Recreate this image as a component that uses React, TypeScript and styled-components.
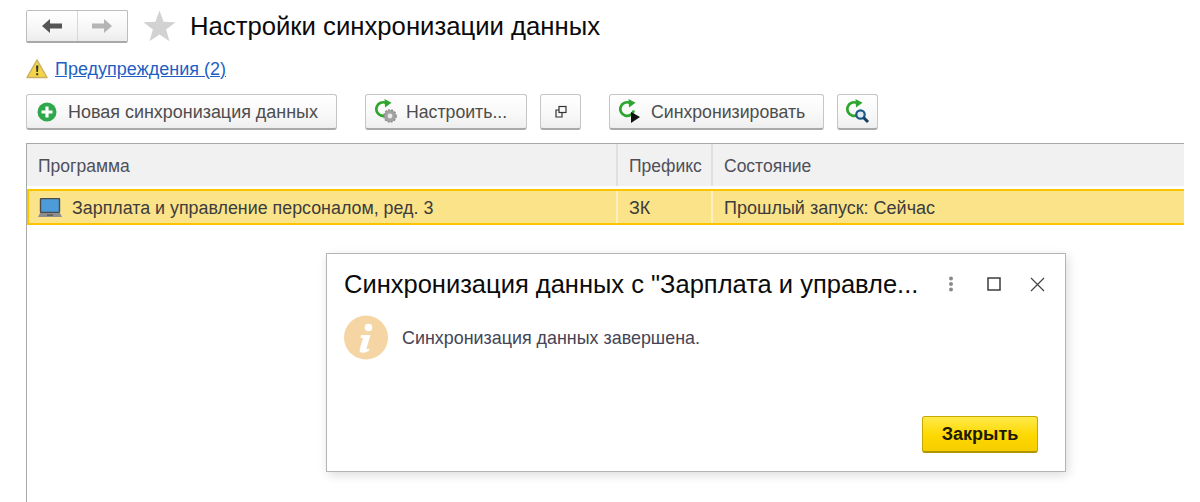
import React from "react";
import styled, { createGlobalStyle } from "styled-components";

const Global = createGlobalStyle`
  html, body { margin: 0; padding: 0; background: #fff; }
  body { font-family: "Liberation Sans", Arial, sans-serif; color: #4a4a4a; }
`;

const Page = styled.div`
  position: relative;
  width: 1200px;
  height: 502px;
  overflow: hidden;
  box-sizing: border-box;
  padding: 9px 16px 0 26px;
  background: #fff;
`;

const Header = styled.div`
  display: flex;
  align-items: center;
  height: 34px;
`;

const NavGroup = styled.div`
  display: flex;
  width: 102px;
  height: 33px;
  box-sizing: border-box;
  border: 1px solid #bdbdbd;
  border-bottom: 2px solid #a8a8a8;
  border-radius: 2px;
  background: linear-gradient(#fff, #f6f6f6 60%, #ececec);
`;

const NavButton = styled.div<{ $divider?: boolean }>`
  flex: 1;
  display: flex;
  align-items: center;
  justify-content: center;
  border-left: ${(p) => (p.$divider ? "1px solid #d8d8d8" : "none")};
`;

const StarWrap = styled.div`
  margin-left: 15px;
  width: 33px;
  height: 32px;
  display: flex;
`;

const Title = styled.h1`
  margin: 0 0 0 14px;
  font-size: 25.7px;
  font-weight: 400;
  line-height: 34px;
  color: #0b0b0b;
`;

const Warnings = styled.div`
  display: flex;
  align-items: center;
  gap: 7px;
  margin-top: 15px;
  height: 22px;
`;

const WarnLink = styled.a`
  font-size: 18px;
  color: #1f5fc4;
  text-decoration: underline;
`;

const Toolbar = styled.div`
  display: flex;
  align-items: flex-start;
  margin-top: 14px;
  height: 36px;
`;

const ToolButton = styled.div<{ $w: number; $ml?: number; $gap?: number; $pl?: number }>`
  display: flex;
  align-items: center;
  justify-content: ${(p) => (p.$w < 50 ? "center" : "flex-start")};
  gap: ${(p) => p.$gap ?? 8}px;
  box-sizing: border-box;
  width: ${(p) => p.$w}px;
  margin-left: ${(p) => p.$ml ?? 0}px;
  height: 36px;
  padding-left: ${(p) => p.$pl ?? 0}px;
  border: 1px solid #c6c6c6;
  border-bottom: 2px solid #a9a9a9;
  border-radius: 3px;
  background: linear-gradient(#fff, #f8f8f8 60%, #eeeeee);
  color: #4d4d4d;
  white-space: nowrap;
`;

const ToolLabel = styled.span<{ $fs: number }>`
  font-size: ${(p) => p.$fs}px;
  padding-top: 1px;
`;

const Table = styled.div`
  margin-top: 13px;
  height: 360px;
  border-left: 1px solid #a9a9a9;
  border-top: 1px solid #a9a9a9;
`;

const HeadRow = styled.div`
  display: grid;
  grid-template-columns: 591px 95px 1fr;
  height: 42px;
  background: #f1f1f1;
  margin-bottom: 3px;
`;

const HeadCell = styled.div<{ $pad: number; $line?: boolean }>`
  display: flex;
  align-items: center;
  padding: 2px 0 0 ${(p) => p.$pad}px;
  border-right: ${(p) => (p.$line ? "2px solid #e0e0e0" : "none")};
  font-size: 17.5px;
  color: #4f4f5a;
`;

const DataRow = styled.div`
  display: grid;
  grid-template-columns: 589px 95px 1fr;
  height: 36px;
  box-sizing: border-box;
  border: 2px solid #fdc400;
  border-right: none;
  background: #fbe38a;
`;

const DataCell = styled.div<{ $pad: number; $line?: boolean; $fs: number }>`
  display: flex;
  align-items: center;
  gap: 10px;
  padding: 2px 0 0 ${(p) => p.$pad}px;
  border-right: ${(p) => (p.$line ? "2px solid #fdf0bd" : "none")};
  font-size: ${(p) => p.$fs}px;
  color: #3c3c3c;
`;

const Modal = styled.div`
  position: absolute;
  left: 326px;
  top: 253px;
  width: 740px;
  height: 219px;
  box-sizing: border-box;
  padding: 0 20px 0 17px;
  background: #fff;
  border: 1px solid #b5b5b5;
  box-shadow: 2px 3px 10px rgba(0, 0, 0, 0.14);
  display: flex;
  flex-direction: column;
`;

const ModalHead = styled.div`
  display: flex;
  align-items: center;
  height: 60px;
`;

const ModalTitle = styled.div`
  flex: 1;
  font-size: 25.5px;
  color: #0b0b0b;
  white-space: nowrap;
`;

const ModalIcons = styled.div`
  display: flex;
  align-items: center;
  gap: 29px;
`;

const DotsSlot = styled.div`
  display: flex;
  margin-right: 4px;
`;

const Message = styled.div`
  display: flex;
  align-items: center;
  gap: 14px;
  height: 46px;
`;

const MessageText = styled.div`
  font-size: 17.9px;
  color: #444455;
  padding-top: 3px;
`;

const ModalFoot = styled.div`
  display: flex;
  justify-content: flex-end;
  margin-top: 56px;
  padding-right: 7px;
`;

const CloseButton = styled.div`
  display: flex;
  align-items: center;
  justify-content: center;
  width: 116px;
  height: 37px;
  box-sizing: border-box;
  border: 1px solid #c7a800;
  border-bottom: 2px solid #b09400;
  border-radius: 3px;
  background: linear-gradient(#ffe94a, #fdd800 55%, #f6ce00);
  font-size: 18px;
  font-weight: 700;
  color: #1e1a00;
`;

const ArrowLeft = () => (
  <svg width="20" height="16" viewBox="0 0 20 16"><path d="M0 8 L8 1 V5.5 H20 V10.5 H8 V15 Z" fill="#555" /></svg>
);
const ArrowRight = () => (
  <svg width="20" height="16" viewBox="0 0 20 16"><path d="M20 8 L12 1 V5.5 H0 V10.5 H12 V15 Z" fill="#b5b5b5" /></svg>
);
const Star = () => (
  <svg width="33" height="32" viewBox="0 0 33 32"><path d="M16.5 0.5 L20.6 11.8 L32.6 12.2 L23.1 19.6 L26.5 31.2 L16.5 24.4 L6.5 31.2 L9.9 19.6 L0.4 12.2 L12.4 11.8 Z" fill="#d2d2d2" /></svg>
);
const WarnIcon = () => (
  <svg width="22" height="20" viewBox="0 0 22 20">
    <path d="M11 1 L21 18.5 H1 Z" fill="#f5d547" stroke="#c9b060" strokeWidth="1.5" strokeLinejoin="round" />
    <path d="M10 6.5 H12.4 L12 13 H10.4 Z M10.2 14.2 H12.2 V16.2 H10.2 Z" fill="#333" />
  </svg>
);
const PlusIcon = () => (
  <svg width="20" height="20" viewBox="0 0 20 20">
    <circle cx="10" cy="10" r="9.5" fill="#2ea84a" />
    <path d="M8.4 4.5 H11.6 V8.4 H15.5 V11.6 H11.6 V15.5 H8.4 V11.6 H4.5 V8.4 H8.4 Z" fill="#fff" />
  </svg>
);
const Refresh = () => (
  <>
    <path d="M14.8 11.5 A6.8 6.8 0 1 1 11 3.9" fill="none" stroke="#2ea62e" strokeWidth="2.7" />
    <path d="M9.5 0 L16.5 3.8 L10 8.5 Z" fill="#2ea62e" />
  </>
);
const RefreshGear = () => (
  <svg width="24" height="26" viewBox="0 0 24 26">
    <Refresh />
    <circle cx="15" cy="17" r="6" fill="#a3a3a3" stroke="#8f8f8f" strokeDasharray="2 1.2" strokeWidth="1.6" />
    <circle cx="15" cy="17" r="2.4" fill="#e8e8e8" />
  </svg>
);
const RefreshPlay = () => (
  <svg width="24" height="26" viewBox="0 0 24 26">
    <Refresh />
    <path d="M12 13 L21 18 L12 24 Z" fill="#111" />
  </svg>
);
const RefreshSearch = () => (
  <svg width="24" height="26" viewBox="0 0 24 26">
    <Refresh />
    <circle cx="14.5" cy="15.5" r="4.2" fill="#dfeaf4" stroke="#1d5a86" strokeWidth="2.2" />
    <path d="M17.5 18.5 L22 23" stroke="#123f60" strokeWidth="3" />
  </svg>
);
const WindowsIcon = () => (
  <svg width="14" height="14" viewBox="0 0 14 14" fill="none" stroke="#333" strokeWidth="1.2">
    <rect x="5" y="1.5" width="7" height="6" />
    <path d="M5 5 H2 V12 H8 V8" />
  </svg>
);
const Laptop = () => (
  <svg width="24" height="20" viewBox="0 0 24 20">
    <rect x="2.5" y="0.5" width="19" height="14" rx="1" fill="#4d9bd8" stroke="#4c4c4c" strokeWidth="1.4" />
    <path d="M2 15 H22 L24 19 H0 Z" fill="#8d8d8d" />
    <rect x="9" y="16.5" width="6" height="1.3" fill="#555" />
  </svg>
);
const InfoIcon = () => (
  <svg width="44" height="45" viewBox="0 0 44 45">
    <circle cx="22" cy="22.5" r="22" fill="#f4d5a3" />
    <circle cx="24.5" cy="12.5" r="3.8" fill="#fff" />
    <path d="M17 20 H26.5 L22.6 33.2 Q22.2 34.8 24.5 33.4 L25.5 35.2 Q21 38.5 17.5 37.6 Q15 37 15.8 34 L19 23 H16.5 Z" fill="#fff" />
  </svg>
);
const DotsIcon = () => (
  <svg width="6" height="16" viewBox="0 0 6 16" fill="#8a8a8a">
    <circle cx="3" cy="2.5" r="2" /><circle cx="3" cy="8" r="2" /><circle cx="3" cy="13.5" r="2" />
  </svg>
);
const MaxIcon = () => (
  <svg width="14" height="14" viewBox="0 0 14 14"><rect x="1" y="1" width="12" height="12" fill="none" stroke="#3c3c3c" strokeWidth="1.5" /></svg>
);
const CloseIcon = () => (
  <svg width="15" height="15" viewBox="0 0 15 15"><path d="M1 1 L14 14 M14 1 L1 14" stroke="#444" strokeWidth="1.2" /></svg>
);

export default function App() {
  return (
    <>
      <Global />
      <Page>
        <Header>
          <NavGroup>
            <NavButton><ArrowLeft /></NavButton>
            <NavButton $divider><ArrowRight /></NavButton>
          </NavGroup>
          <StarWrap><Star /></StarWrap>
          <Title>Настройки синхронизации данных</Title>
        </Header>
        <Warnings>
          <WarnIcon />
          <WarnLink>Предупреждения (2)</WarnLink>
        </Warnings>
        <Toolbar>
          <ToolButton $w={311} $pl={10} $gap={11}><PlusIcon /><ToolLabel $fs={17.95}>Новая синхронизация данных</ToolLabel></ToolButton>
          <ToolButton $w={162} $ml={28} $pl={9} $gap={7}><RefreshGear /><ToolLabel $fs={17.7}>Настроить...</ToolLabel></ToolButton>
          <ToolButton $w={41} $ml={13}><WindowsIcon /></ToolButton>
          <ToolButton $w={215} $ml={28} $pl={9} $gap={8}><RefreshPlay /><ToolLabel $fs={17.7}>Синхронизировать</ToolLabel></ToolButton>
          <ToolButton $w={41} $ml={13}><RefreshSearch /></ToolButton>
        </Toolbar>
        <Table>
          <HeadRow>
            <HeadCell $pad={11} $line>Программа</HeadCell>
            <HeadCell $pad={11} $line>Префикс</HeadCell>
            <HeadCell $pad={11}>Состояние</HeadCell>
          </HeadRow>
          <DataRow>
            <DataCell $pad={9} $line $fs={17.85}><Laptop />Зарплата и управление персоналом, ред. 3</DataCell>
            <DataCell $pad={11} $line $fs={18}>ЗК</DataCell>
            <DataCell $pad={11} $fs={18}>Прошлый запуск: Сейчас</DataCell>
          </DataRow>
        </Table>
        <Modal>
          <ModalHead>
            <ModalTitle>Синхронизация данных с "Зарплата и управле...</ModalTitle>
            <ModalIcons>
              <DotsSlot><DotsIcon /></DotsSlot>
              <MaxIcon />
              <CloseIcon />
            </ModalIcons>
          </ModalHead>
          <Message>
            <InfoIcon />
            <MessageText>Синхронизация данных завершена.</MessageText>
          </Message>
          <ModalFoot><CloseButton>Закрыть</CloseButton></ModalFoot>
        </Modal>
      </Page>
    </>
  );
}
